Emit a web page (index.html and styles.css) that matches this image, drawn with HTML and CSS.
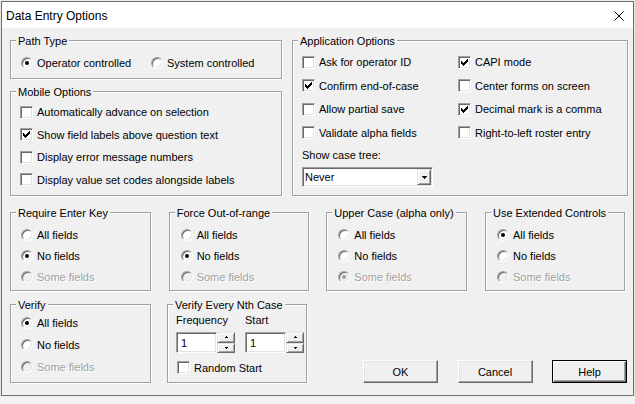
FILE: index.html
```html
<!DOCTYPE html>
<html lang="en">
<head>
    <meta charset="UTF-8">
    <meta name="viewport" content="width=device-width, initial-scale=1.0">
    <title>Data Entry Options</title>
    <link rel="stylesheet" href="styles.css">
</head>
<body>
    <div class="window">
        <div class="titlebar">
            <span class="title">Data Entry Options</span>
            <svg class="close" width="10" height="10" viewBox="0 0 10 10"><path d="M0.5 0.5L9.5 9.5M9.5 0.5L0.5 9.5" stroke="#000" stroke-width="1"/></svg>
        </div>

        <div class="dialog">
            <div class="top-row">
                <div class="left-col">
                    <div class="group path-type">
                        <div class="group-title">Path Type</div>
                        <div class="path-options">
                            <div class="option"><span class="radio checked"></span>Operator controlled</div>
                            <div class="option"><span class="radio"></span>System controlled</div>
                        </div>
                    </div>

                    <div class="group mobile">
                        <div class="group-title">Mobile Options</div>
                        <div class="option-list">
                            <div class="option"><span class="check"></span>Automatically advance on selection</div>
                            <div class="option"><span class="check"><svg width="7" height="7" viewBox="0 0 7 7"><path d="M0 2h1v1h1v1h1V3h1V2h1V1h1V0h1v3H6v1H5v1H4v1H3v1H2V6H1V5H0z"/></svg></span>Show field labels above question text</div>
                            <div class="option"><span class="check"></span>Display error message numbers</div>
                            <div class="option"><span class="check"></span>Display value set codes alongside labels</div>
                        </div>
                    </div>
                </div>

                <div class="group app">
                    <div class="group-title">Application Options</div>
                    <div class="app-body">
                        <div class="app-options">
                            <div class="option"><span class="check"></span>Ask for operator ID</div>
                            <div class="option"><span class="check"><svg width="7" height="7" viewBox="0 0 7 7"><path d="M0 2h1v1h1v1h1V3h1V2h1V1h1V0h1v3H6v1H5v1H4v1H3v1H2V6H1V5H0z"/></svg></span>CAPI mode</div>
                            <div class="option"><span class="check"><svg width="7" height="7" viewBox="0 0 7 7"><path d="M0 2h1v1h1v1h1V3h1V2h1V1h1V0h1v3H6v1H5v1H4v1H3v1H2V6H1V5H0z"/></svg></span>Confirm end-of-case</div>
                            <div class="option"><span class="check"></span>Center forms on screen</div>
                            <div class="option"><span class="check"></span>Allow partial save</div>
                            <div class="option"><span class="check"><svg width="7" height="7" viewBox="0 0 7 7"><path d="M0 2h1v1h1v1h1V3h1V2h1V1h1V0h1v3H6v1H5v1H4v1H3v1H2V6H1V5H0z"/></svg></span>Decimal mark is a comma</div>
                            <div class="option"><span class="check"></span>Validate alpha fields</div>
                            <div class="option"><span class="check"></span>Right-to-left roster entry</div>
                        </div>
                        <div class="field-label">Show case tree:</div>
                        <div class="combo">
                            <span class="combo-text">Never</span>
                            <span class="combo-button"><svg width="5" height="3" viewBox="0 0 5 3"><path d="M0 0h5v1H4v1H3v1H2V2H1V1H0z"/></svg></span>
                        </div>
                    </div>
                </div>
            </div>

            <div class="radio-row">
                <div class="group">
                    <div class="group-title">Require Enter Key</div>
                    <div class="radio-list">
                        <div class="option"><span class="radio"></span>All fields</div>
                        <div class="option"><span class="radio checked"></span>No fields</div>
                        <div class="option disabled"><span class="radio"></span>Some fields</div>
                    </div>
                </div>
                <div class="group">
                    <div class="group-title">Force Out-of-range</div>
                    <div class="radio-list">
                        <div class="option"><span class="radio"></span>All fields</div>
                        <div class="option"><span class="radio checked"></span>No fields</div>
                        <div class="option disabled"><span class="radio"></span>Some fields</div>
                    </div>
                </div>
                <div class="group">
                    <div class="group-title">Upper Case (alpha only)</div>
                    <div class="radio-list">
                        <div class="option"><span class="radio"></span>All fields</div>
                        <div class="option"><span class="radio"></span>No fields</div>
                        <div class="option disabled"><span class="radio checked"></span>Some fields</div>
                    </div>
                </div>
                <div class="group">
                    <div class="group-title">Use Extended Controls</div>
                    <div class="radio-list">
                        <div class="option"><span class="radio checked"></span>All fields</div>
                        <div class="option"><span class="radio"></span>No fields</div>
                        <div class="option disabled"><span class="radio"></span>Some fields</div>
                    </div>
                </div>
            </div>

            <div class="bottom-row">
                <div class="group verify">
                    <div class="group-title">Verify</div>
                    <div class="radio-list">
                        <div class="option"><span class="radio checked"></span>All fields</div>
                        <div class="option"><span class="radio"></span>No fields</div>
                        <div class="option disabled"><span class="radio"></span>Some fields</div>
                    </div>
                </div>

                <div class="group nth-case">
                    <div class="group-title">Verify Every Nth Case</div>
                    <div class="nth-body">
                        <div class="nth-fields">
                            <div class="nth-field">
                                <span class="field-label">Frequency</span>
                                <div class="spin">
                                    <input class="spin-input" type="text" value="1">
                                    <div class="spin-buttons">
                                        <span class="spin-button"><svg width="3" height="2" viewBox="0 0 3 2"><path d="M1 0h1v1h1v1H0V1h1z"/></svg></span>
                                        <span class="spin-button"><svg width="3" height="2" viewBox="0 0 3 2"><path d="M0 0h3v1H2v1H1V1H0z"/></svg></span>
                                    </div>
                                </div>
                            </div>
                            <div class="nth-field">
                                <span class="field-label">Start</span>
                                <div class="spin">
                                    <input class="spin-input" type="text" value="1">
                                    <div class="spin-buttons">
                                        <span class="spin-button"><svg width="3" height="2" viewBox="0 0 3 2"><path d="M1 0h1v1h1v1H0V1h1z"/></svg></span>
                                        <span class="spin-button"><svg width="3" height="2" viewBox="0 0 3 2"><path d="M0 0h3v1H2v1H1V1H0z"/></svg></span>
                                    </div>
                                </div>
                            </div>
                        </div>
                        <div class="option random-start"><span class="check"></span>Random Start</div>
                    </div>
                </div>

                <div class="buttons">
                    <button class="button">OK</button>
                    <button class="button">Cancel</button>
                    <button class="button default">Help</button>
                </div>
            </div>
        </div>
    </div>
</body>
</html>
```

FILE: styles.css
```css
body {
    margin: 0;
    background: #f2f2f2;
    font-family: "Liberation Sans", Arial, sans-serif;
    font-size: 11px;
    color: #000;
}
.window {
    width: 633px;
    height: 395px;
    margin: 1px 0 0 1px;
    box-sizing: border-box;
    border: 1px solid #6f6f6f;
    background: #f0f0f0;
    box-shadow: 0 3px 8px rgba(0, 0, 0, 0.12);
    display: flex;
    flex-direction: column;
}
.titlebar {
    height: 26px;
    box-sizing: border-box;
    background: #fff;
    display: flex;
    align-items: flex-start;
    padding: 7px 9px 0 4px;
}
.title {
    font-size: 12px;
    line-height: 15px;
}
.close {
    margin: 2px 0 0 auto;
}
.dialog {
    padding: 12px 5px 0 8px;
}

/* group boxes */
.group {
    box-sizing: border-box;
    border: 1px solid #a0a0a0;
    box-shadow: inset 1px 1px 0 #fff, 1px 1px 0 #fff;
}
.group-title {
    width: fit-content;
    margin: -6px 0 0 5px;
    padding: 0 2px;
    line-height: 13px;
    background: #f0f0f0;
}

.top-row {
    display: flex;
    gap: 10px;
}
.left-col {
    width: 272px;
    display: flex;
    flex-direction: column;
    gap: 12px;
}
.path-type {
    height: 39px;
}
.mobile {
    height: 105px;
}
.app {
    width: 336px;
}

/* options */
.option {
    display: flex;
    align-items: center;
    gap: 4px;
    white-space: nowrap;
}
.option.disabled {
    color: #a0a0a0;
    text-shadow: 1px 1px 0 #fff;
}
.path-options {
    display: flex;
    padding: 7px 0 0 10px;
}
.path-options .option {
    width: 139px;
    height: 16px;
}
.option-list {
    padding: 2px 0 0 9px;
}
.option-list .option {
    height: 22.5px;
}
.app-body {
    padding: 2.5px 0 0 9px;
}
.app-options {
    display: grid;
    grid-template-columns: 156px 1fr;
    grid-auto-rows: 23.5px;
}
.field-label {
    display: block;
    line-height: 13px;
    margin-top: 4px;
}

/* classic controls */
.check {
    width: 13px;
    height: 13px;
    box-sizing: border-box;
    flex: none;
    border: 1px solid;
    border-color: #a0a0a0 #fff #fff #a0a0a0;
    box-shadow: inset 1px 1px 0 #696969, inset -1px -1px 0 #e3e3e3;
    background: #fff;
    display: flex;
    align-items: center;
    justify-content: center;
}
.check svg {
    shape-rendering: crispEdges;
}
.radio {
    position: relative;
    width: 12px;
    height: 12px;
    box-sizing: border-box;
    flex: none;
    border-radius: 50%;
    border: 1px solid;
    border-color: #a0a0a0 #fff #fff #a0a0a0;
    box-shadow: inset 1px 1px 0 #696969, inset -1px -1px 0 #e3e3e3;
    background: #fff;
}
.radio.checked::after {
    content: "";
    position: absolute;
    left: 3px;
    top: 3px;
    width: 4px;
    height: 4px;
    border-radius: 50%;
    background: #000;
}
.option.disabled .radio {
    background: #f0f0f0;
}
.option.disabled .radio.checked::after {
    background: #a0a0a0;
}

.combo {
    width: 131px;
    height: 20px;
    margin-top: 5.5px;
    box-sizing: border-box;
    border: 1px solid;
    border-color: #a0a0a0 #fff #fff #a0a0a0;
    box-shadow: inset 1px 1px 0 #696969, inset -1px -1px 0 #e3e3e3;
    background: #fff;
    display: flex;
    align-items: center;
    padding: 1px;
}
.combo-text {
    flex: 1;
    padding-left: 1px;
}
.combo-button,
.spin-button {
    box-sizing: border-box;
    border: 1px solid;
    border-color: #e3e3e3 #696969 #696969 #e3e3e3;
    box-shadow: inset 1px 1px 0 #fff, inset -1px -1px 0 #a0a0a0;
    background: #f0f0f0;
    display: flex;
    align-items: center;
    justify-content: center;
}
.combo-button {
    width: 14px;
    height: 16px;
}
.combo-button svg,
.spin-button svg {
    shape-rendering: crispEdges;
}

/* bottom rows */
.radio-row {
    display: flex;
    justify-content: space-between;
    width: 615px;
    margin-top: 16px;
}
.radio-row .group,
.verify {
    width: 141px;
    height: 79px;
}
.radio-row .group:nth-child(even) {
    width: 140px;
}
.radio-list {
    padding: 4.5px 0 0 10px;
}
.radio-list .option {
    height: 21px;
}
.radio-row .group + .group .radio-list {
    padding-left: 11px;
}
.verify .radio-list {
    padding-top: 0;
}
.verify .radio-list .option {
    height: 22px;
}

.bottom-row {
    display: flex;
    gap: 16px;
    margin-top: 13px;
}
.nth-case {
    width: 140px;
    height: 79px;
}
.nth-body {
    padding: 2px 0 0 8px;
}
.nth-fields {
    display: flex;
    gap: 10px;
}
.nth-field .field-label {
    margin-top: 0;
}
.spin {
    display: flex;
    margin-top: 5px;
}
.spin-input {
    width: 41px;
    height: 21px;
    box-sizing: border-box;
    margin: 0;
    padding: 0 0 0 4px;
    font: inherit;
    border: 1px solid;
    border-color: #a0a0a0 #fff #fff #a0a0a0;
    box-shadow: inset 1px 1px 0 #696969, inset -1px -1px 0 #e3e3e3;
    background: #fff;
    outline: none;
}
.spin-buttons {
    width: 18px;
    height: 21px;
    display: flex;
    flex-direction: column;
}
.spin-button {
    flex: 1;
}
.random-start {
    margin-top: 8px;
    margin-left: 1px;
}

.buttons {
    margin-left: auto;
    align-self: flex-end;
    display: flex;
    gap: 19.5px;
    margin-right: 1px;
}
.button {
    width: 75px;
    height: 23px;
    box-sizing: border-box;
    margin: 0;
    padding: 0;
    font-family: "Liberation Sans", Arial, sans-serif;
    font-size: 11px;
    color: #000;
    background: #f0f0f0;
    border: 1px solid;
    border-color: #fff #696969 #696969 #fff;
    box-shadow: inset -1px -1px 0 #a0a0a0, inset 1px 1px 0 #e3e3e3;
}
.button.default {
    border-color: #000;
    box-shadow: inset 1px 1px 0 #fff, inset -1px -1px 0 #696969, inset -2px -2px 0 #a0a0a0;
}
```
